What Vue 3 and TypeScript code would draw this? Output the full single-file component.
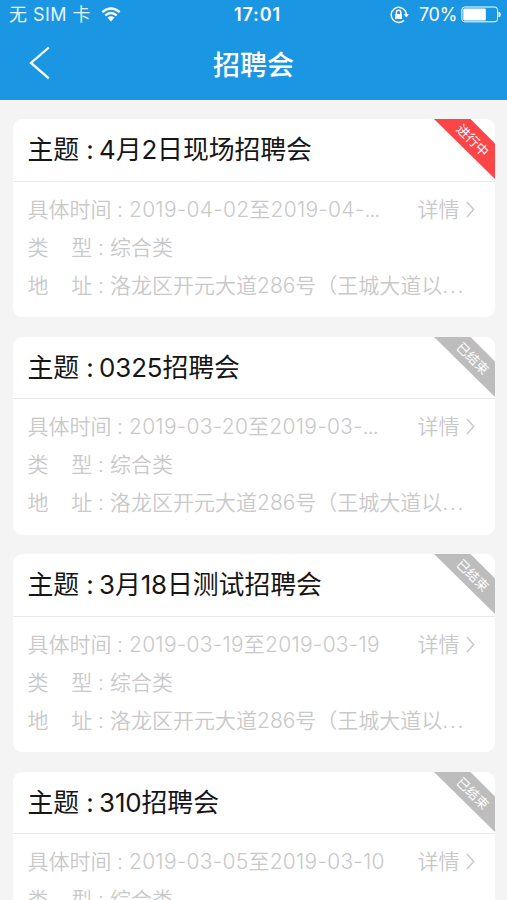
<script setup lang="ts">
interface Fair {
  id: number
  title: string
  period: string
  clipped: boolean
  type: string
  address: string
  active: boolean
}

const address = '洛龙区开元大道286号（王城大道以'

const fairs: Fair[] = [
  { id: 1, title: '4月2日现场招聘会', period: '2019-04-02至2019-04-', clipped: true, type: '综合类', address, active: true },
  { id: 2, title: '0325招聘会', period: '2019-03-20至2019-03-', clipped: true, type: '综合类', address, active: false },
  { id: 3, title: '3月18日测试招聘会', period: '2019-03-19至2019-03-19', clipped: false, type: '综合类', address, active: false },
  { id: 4, title: '310招聘会', period: '2019-03-05至2019-03-10', clipped: false, type: '综合类', address, active: false },
]
</script>

<template>
  <div class="screen">
    <header class="top">
      <div class="status">
        <div class="status-left">
          <span class="carrier">无 SIM 卡</span>
          <svg class="wifi" width="20" height="15" viewBox="0 0 20 15">
            <path d="M1.3 5.1Q10 -2.3 18.7 5.1" />
            <path d="M4.3 8.4Q10 3.7 15.7 8.4" />
            <path class="solid" d="M6.5 10.6Q10 7.8 13.5 10.6L10 14.4Z" />
          </svg>
        </div>
        <span class="clock">17:01</span>
        <div class="status-right">
          <svg class="lock" width="19" height="18" viewBox="0 0 19 18">
            <path d="M15.1 4.7A7.6 7.6 0 1 0 14 14.4M15.1 4.7Q16.2 6.3 16.3 8.5" />
            <path class="solid" d="M13.8 8.3H19L16.4 11.6Z" />
            <path class="solid" d="M5.2 8H12V13H5.2Z" />
            <path d="M6.4 8.3V6.5A2.2 2.2 0 0 1 10.8 6.5V8.3" />
          </svg>
          <span class="percent">70%</span>
          <svg class="battery" width="40" height="17" viewBox="0 0 40 17">
            <rect x=".9" y="1" width="35.6" height="14.8" rx="2.7" />
            <rect class="solid" x="2.3" y="2.4" width="22.5" height="12" rx="1" />
            <path class="solid" d="M37.5 5.5Q39.8 6 39.8 8.4T37.5 11.3Z" />
          </svg>
        </div>
      </div>
      <nav class="nav">
        <svg class="back" width="22" height="34" viewBox="0 0 22 34">
          <path d="M19.8 1.5L2 16.9L19.8 32.4" />
        </svg>
        <h1>招聘会</h1>
      </nav>
    </header>

    <main class="list">
      <article v-for="fair in fairs" :key="fair.id" class="card">
        <h2><span class="subject">主题 :</span><span>{{ fair.title }}</span></h2>
        <div class="details">
          <div class="row">
            <span class="label wide"><span>具体时间</span><span class="colon">:</span></span>
            <span class="value period">{{ fair.period }}<span v-if="fair.clipped" class="tight">...</span></span>
            <a class="more">详情
              <svg width="10" height="18" viewBox="0 0 10 18"><path d="M1 1L7.6 8.5L1 16" /></svg>
            </a>
          </div>
          <div class="row">
            <span class="label"><span>类</span><span>型</span><span class="colon">:</span></span>
            <span class="value">{{ fair.type }}</span>
          </div>
          <div class="row">
            <span class="label"><span>地</span><span>址</span><span class="colon">:</span></span>
            <span class="value">{{ fair.address }}<span class="loose">...</span></span>
          </div>
        </div>
        <svg class="ribbon" :class="{ active: fair.active }" width="61" height="60" viewBox="0 0 61 60">
          <path d="M0 0H36.5L61 24.5V60Z" />
          <text x="38.5" y="26" transform="rotate(45 38.5 21.5)">{{ fair.active ? '进行中' : '已结束' }}</text>
        </svg>
      </article>
    </main>
  </div>
</template>

<style>
body {
  margin: 0;
  background: #f4f4f4;
  overflow: hidden;
}
</style>

<style scoped>
.screen {
  height: 900px;
  overflow: hidden;
  background: #f4f4f4;
  font-family: Inter, "Noto Sans CJK SC", sans-serif;
}

.top {
  height: 100px;
  background: #1b96e2;
  color: #fff;
}

.status {
  display: grid;
  grid-template-columns: 1fr auto 1fr;
  align-items: center;
  height: 28px;
  padding: 1px 6px 0 9px;
  box-sizing: border-box;
  font-size: 18px;
  line-height: 27px;
}

.status-left,
.status-right {
  display: flex;
  align-items: center;
}

.status-right {
  justify-content: flex-end;
}

.carrier {
  width: 92px;
  white-space: nowrap;
  letter-spacing: 0.45px;
  color: #e5f5ff;
}

.clock {
  padding-left: 4px;
  font-weight: 600;
  letter-spacing: 0.9px;
  margin-right: -1px;
}

.lock {
  margin-right: 10px;
}

.percent {
  width: 42px;
  white-space: nowrap;
  letter-spacing: -0.3px;
}

svg {
  flex: none;
  fill: none;
  stroke: currentColor;
  stroke-width: 1.5;
}

.wifi {
  stroke-width: 2.4;
}

.battery {
  stroke-width: 1;
}

.solid {
  fill: currentColor;
  stroke: none;
}

.nav {
  display: grid;
  grid-template-columns: 70px 1fr 70px;
  align-items: center;
  height: 72px;
}

.back {
  margin: 0 0 2px 29px;
  stroke-width: 2.3;
}

h1 {
  margin: 0;
  padding-top: 4px;
  text-align: center;
  font-size: 27px;
  font-weight: 500;
  line-height: 68px;
}

.list {
  display: flex;
  flex-direction: column;
  gap: 19.5px;
  padding: 19px 12px 0 13px;
}

.card {
  position: relative;
  flex: none;
  height: 198px;
  border-radius: 9px;
  background: #fff;
}

h2 {
  display: flex;
  box-sizing: border-box;
  height: 62.5px;
  margin: 0;
  padding-left: 14.5px;
  border-bottom: 1px solid #e9e9e9;
  font-size: 25.9px;
  font-weight: 400;
  line-height: 61px;
  letter-spacing: -0.1px;
  color: #161616;
  white-space: nowrap;
}

.subject {
  width: 71.5px;
}

.details {
  padding: 9.4px 15px 0 14.5px;
  font-size: 21px;
  line-height: 38px;
  color: #c9c9c9;
  font-weight: 350;
}

.row {
  display: flex;
  height: 38px;
  white-space: nowrap;
}

.label {
  display: flex;
  justify-content: space-between;
  box-sizing: border-box;
  width: 82.5px;
  padding-right: 6px;
}

.label.wide {
  width: 101.5px;
}

.label:not(.wide) .colon {
  margin-left: -17px;
}

.period {
  flex: 1;
  letter-spacing: 0.25px;
}

.tight {
  letter-spacing: -1px;
}

.loose {
  letter-spacing: 1.7px;
}

.more {
  display: flex;
  align-items: center;
  gap: 6px;
  margin-right: 4.5px;
}

.ribbon {
  position: absolute;
  top: 0;
  right: 0;
  stroke: none;
  fill: #bdbdbd;
}

.ribbon.active {
  fill: #fb4547;
}

.ribbon text {
  fill: #fff;
  font-size: 13px;
  font-weight: 400;
  text-anchor: middle;
}
</style>
